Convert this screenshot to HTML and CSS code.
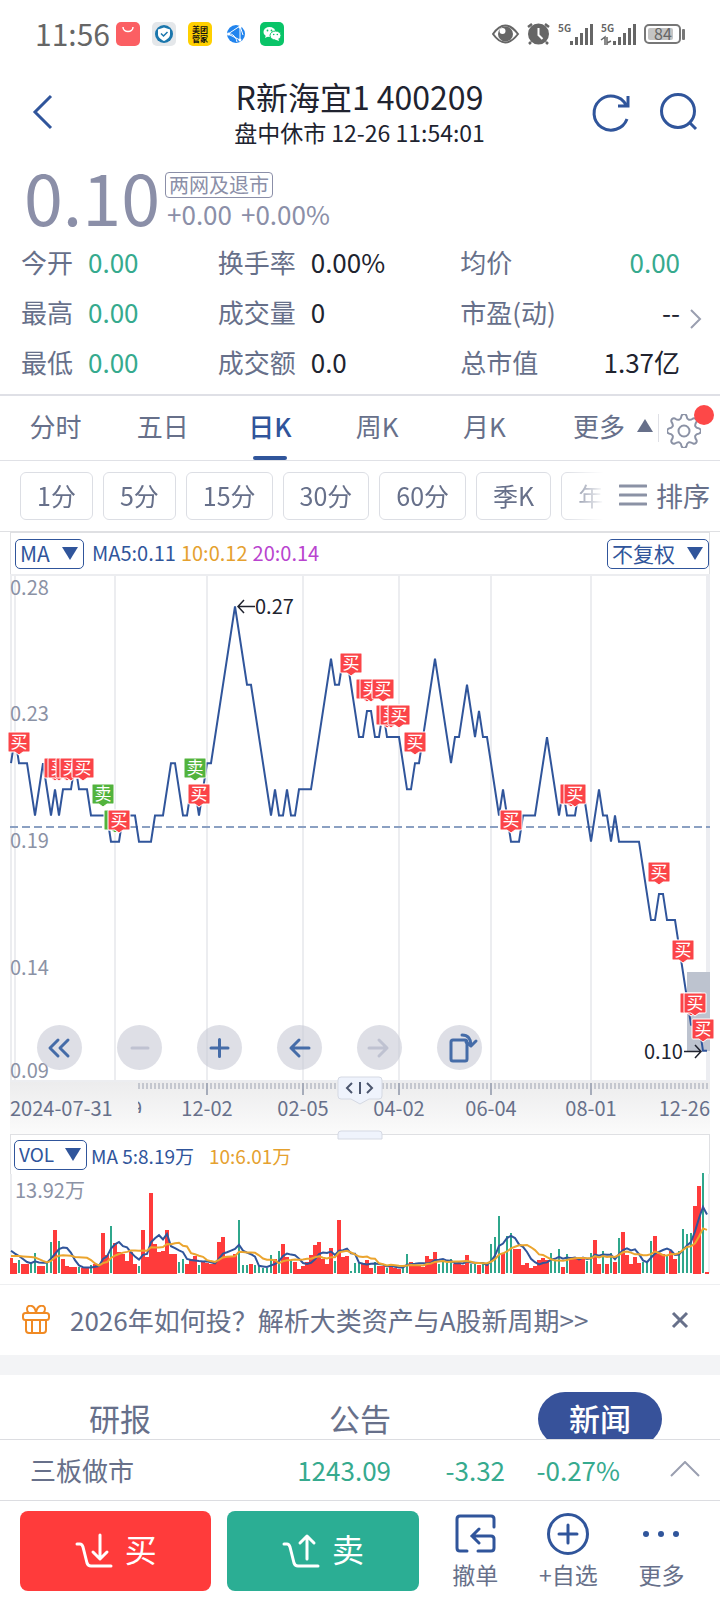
FILE: index.html
```html
<!DOCTYPE html>
<html lang="zh-CN">
<head>
<meta charset="utf-8">
<meta name="viewport" content="width=device-width, initial-scale=1">
<title>R新海宜1 400209</title>
<link rel="stylesheet" href="styles.css">
</head>
<body>
<div class="app">
  <div class="status">
    <span class="clock">11:56</span>
    <svg class="app-icon" viewBox="0 0 24 24"><rect width="24" height="24" rx="5" fill="#fb5f63"/><path d="M7 5c0 6 10 6 10 0" fill="none" stroke="#fff" stroke-width="1.5"/></svg>
    <svg class="app-icon" viewBox="0 0 24 24"><rect width="24" height="24" rx="5" fill="#e4e7ea"/><circle cx="12" cy="12" r="9" fill="#1b77ad"/><path d="M12 5.500l6 2v5c0 3-3 5-6 6.500-3-1.500-6-3.500-6-6.500v-5z" fill="#fff"/><path d="M9 11.500l2.500 2.500 4-4" fill="none" stroke="#1b77ad" stroke-width="1.500"/></svg>
    <span class="app-icon meituan">美团<br>管家</span>
    <svg class="app-icon" viewBox="0 0 24 24"><circle cx="12" cy="12" r="9" fill="#2184ee"/><path d="M4 12l12-8M4 12l12 6M16 4v14M4 12c2-1 8 1 9 8M16 4l3 9" fill="none" stroke="#fff" stroke-width="1"/><circle cx="4.500" cy="12" r="1.500" fill="#fff"/><circle cx="16" cy="5" r="1.500" fill="#fff"/><circle cx="16" cy="18" r="1.500" fill="#fff"/></svg>
    <svg class="app-icon" viewBox="0 0 24 24"><rect width="24" height="24" rx="5" fill="#09c468"/><ellipse cx="9.500" cy="10" rx="6" ry="5" fill="#fff"/><path d="M5 16l1-3 3 1z" fill="#fff"/><ellipse cx="15.500" cy="13.500" rx="5.500" ry="4.500" fill="#fff" stroke="#09c468"/><path d="M19 19l-1-3-3 1.500z" fill="#fff"/><g fill="#09c468"><circle cx="7.500" cy="8.500" r=".9"/><circle cx="11.500" cy="8.500" r=".9"/><circle cx="13.700" cy="12.500" r=".8"/><circle cx="17.300" cy="12.500" r=".8"/></g></svg>
    <svg class="status-right" viewBox="0 0 196 26" role="img" aria-label="5G 84">
      <g fill="#666">
        <path d="M1 13q12-17 25 0q-13 17-25 0z" fill="none" stroke="#666" stroke-width="2"/>
        <circle cx="13.500" cy="13" r="7.500"/><circle cx="10.500" cy="10" r="3" fill="#fff"/>
        <circle cx="46.500" cy="13" r="10.500"/>
        <path d="M36 6l4-3M57 6l-4-3M39 21l-2 2M54 21l2 2" stroke="#666" stroke-width="2.500"/>
        <path d="M46.500 7v7l4 4" fill="none" stroke="#fff" stroke-width="2"/>
        <text x="66" y="11" class="net">5G</text><text x="109" y="11" class="net">5G</text>
        <path d="M78 20h3v4h-3zM83 16h3v8h-3zM88 12h3v12h-3zM93 7h3v17h-3zM98 3h3v21h-3zM121 20h3v4h-3zM126 16h3v8h-3zM131 12h3v12h-3zM136 7h3v17h-3zM141 3h3v21h-3z"/>
        <path d="M109 19l4-3v8M115 16v8M115 22l4-2" fill="none" stroke="#666" stroke-width="1.500"/>
      </g>
      <rect x="153" y="4" width="35" height="18" rx="4" fill="none" stroke="#777" stroke-width="2"/>
      <rect x="156" y="7" width="25" height="12" rx="2" fill="#c4c4c4"/>
      <rect x="190" y="8" width="3" height="11" rx="1" fill="#777"/>
      <text x="171" y="19" text-anchor="middle" class="battery">84</text>
    </svg>
  </div>

  <header class="header">
    <button class="icon-btn back" aria-label="返回"><svg width="20" height="34" viewBox="0 0 20 34"><path d="M18 1L2 17l16 16"/></svg></button>
    <div class="title">
      <h1>R新海宜1 400209</h1>
      <p>盘中休市 12-26 11:54:01</p>
    </div>
    <div class="header-actions">
      <button class="icon-btn" aria-label="刷新"><svg width="38" height="38" viewBox="0 0 38 38"><path d="M35 26A17 17 0 1 1 34 12M36 3v10H26"/></svg></button>
      <button class="icon-btn search" aria-label="搜索"><svg width="38" height="38" viewBox="0 0 38 38"><circle cx="18" cy="18" r="16.500"/><path d="M29 29l7 7"/></svg></button>
    </div>
  </header>

  <main class="content">
    <section class="quote">
      <strong class="price">0.10</strong>
      <div class="quote-side">
        <span class="tag">两网及退市</span>
        <span class="change"><span>+0.00</span><span>+0.00%</span></span>
      </div>
    </section>

    <section class="stats">
      <dl>
        <div><dt>今开</dt><dd class="green">0.00</dd></div>
        <div><dt>最高</dt><dd class="green">0.00</dd></div>
        <div><dt>最低</dt><dd class="green">0.00</dd></div>
      </dl>
      <dl>
        <div><dt>换手率</dt><dd>0.00%</dd></div>
        <div><dt>成交量</dt><dd>0</dd></div>
        <div><dt>成交额</dt><dd>0.0</dd></div>
      </dl>
      <dl class="spread">
        <div><dt>均价</dt><dd class="green">0.00</dd></div>
        <div><dt>市盈(动)</dt><dd>--</dd></div>
        <div><dt>总市值</dt><dd>1.37亿</dd></div>
      </dl>
      <button class="more-stats" aria-label="更多指标"><svg width="12" height="20" viewBox="0 0 12 20"><path d="M1 1l9 9-9 9"/></svg></button>
    </section>

    <nav class="periods">
      <button class="period">分时</button>
      <button class="period">五日</button>
      <button class="period active">日K</button>
      <button class="period">周K</button>
      <button class="period">月K</button>
      <button class="period-more">更多<i class="tri up"></i></button>
      <button class="gear" aria-label="设置"><svg width="34" height="34" viewBox="-17 -17 34 34"><path d="M15.300 -2.400A2.600 2.600 0 0 1 15.300 2.400C11 3 10 5.500 12.500 9.100A2.600 2.600 0 0 1 9.100 12.500C5.500 10 3 11 2.400 15.300A2.600 2.600 0 0 1 -2.400 15.300C-3 11 -5.500 10 -9.100 12.500A2.600 2.600 0 0 1 -12.500 9.100C-10 5.500 -11 3 -15.300 2.400A2.600 2.600 0 0 1 -15.300 -2.400C-11 -3 -10 -5.500 -12.500 -9.100A2.600 2.600 0 0 1 -9.100 -12.500C-5.500 -10 -3 -11 -2.400 -15.300A2.600 2.600 0 0 1 2.400 -15.300C3 -11 5.500 -10 9.100 -12.500A2.600 2.600 0 0 1 12.500 -9.100C10 -5.500 11 -3 15.300 -2.400Z"/><circle r="5.500"/></svg><i class="dot"></i></button>
    </nav>

    <div class="chips">
      <div class="chip-list">
        <button class="chip">1分</button>
        <button class="chip">5分</button>
        <button class="chip">15分</button>
        <button class="chip">30分</button>
        <button class="chip">60分</button>
        <button class="chip">季K</button>
        <button class="chip">年K</button>
      </div>
      <button class="sort"><svg width="28" height="24" viewBox="0 0 28 24"><path d="M1 3h26M1 12h26M1 21h26"/></svg>排序</button>
    </div>

    <section class="chart">
      <div class="chart-head">
        <label class="picker"><select class="wide" aria-label="主图指标"><option>MA</option></select><i class="tri"></i></label>
        <p class="legend"><span class="blue">MA5:0.11</span><span class="gold">10:0.12</span><span class="purple">20:0.14</span></p>
        <label class="picker end"><select class="wide" aria-label="复权"><option>不复权</option></select><i class="tri"></i></label>
      </div>
      <div class="plot">
        <svg id="price" class="svg" viewBox="10 574 700 560">
          <defs>
            <linearGradient id="strip" x2="0" y2="1"><stop stop-color="#ececed"/><stop offset="1" stop-color="#fbfbfb"/></linearGradient>
            <clipPath id="cut"><rect x="138" y="1096" width="8" height="17"/></clipPath>
          </defs>
        </svg>
        <div class="tools">
          <button aria-label="展开"><svg viewBox="0 0 45 45"><path d="M21 15l-8 8 8 8M31 15l-8 8 8 8"/></svg></button>
          <button aria-label="缩小" disabled><svg viewBox="0 0 45 45"><path d="M15 23h16"/></svg></button>
          <button aria-label="放大"><svg viewBox="0 0 45 45"><path d="M14 23h17M22.500 14.500v17"/></svg></button>
          <button aria-label="左移"><svg viewBox="0 0 45 45"><path d="M32 23H14M22 15l-8 8 8 8"/></svg></button>
          <button aria-label="右移" disabled><svg viewBox="0 0 45 45"><path d="M12 23h18M22 15l8 8-8 8"/></svg></button>
          <button aria-label="横屏"><svg viewBox="0 0 45 45"><rect x="14" y="15" width="16" height="21" rx="2"/><path d="M25 10c6 0 9 4 9 10M29 17l5 4 5-5"/></svg></button>
        </div>
      </div>
      <div class="chart-head volume">
        <label class="picker"><select aria-label="副图指标"><option>VOL</option></select><i class="tri"></i></label>
        <p class="legend"><span class="blue">MA 5:8.19万</span><span class="gold second">10:6.01万</span></p>
      </div>
      <svg id="vol" class="svg" viewBox="10 1174 700 102"></svg>
    </section>

    <aside class="banner">
      <svg width="28" height="30" viewBox="0 0 28 30"><rect x="1" y="8" width="26" height="7" rx="2.500"/><path d="M4 15v10q0 3 3 3h14q3 0 3-3V15M10 15v13M18 15v13M14 8c-1-9-9-9-9-4q0 3 2 4M14 8c1-9 9-9 9-4q0 3-2 4"/></svg>
      <a href="#">2026年如何投？解析大类资产与A股新周期&gt;&gt;</a>
      <button aria-label="关闭"><svg width="18" height="18" viewBox="0 0 18 18"><path d="M2 2l14 14M16 2L2 16"/></svg></button>
    </aside>

    <nav class="sections">
      <button>研报</button><button>公告</button><button class="active">新闻</button>
    </nav>
  </main>

  <footer class="footer">
    <div class="index">
      <span class="name">三板做市</span><span>1243.09</span><span>-3.32</span><span>-0.27%</span>
      <button aria-label="展开指数"><svg width="30" height="16" viewBox="0 0 30 16"><path d="M1 15L15 1l14 14"/></svg></button>
    </div>
    <div class="actions">
      <button class="trade buy"><svg width="38" height="36" viewBox="0 0 38 36"><path d="M2 11h3q2 0 3 3l4 16q1 3 4 3h20M25 2v23M18 19l7 7 7-7"/></svg><span>买</span></button>
      <button class="trade sell"><svg width="38" height="36" viewBox="0 0 38 36"><path d="M2 11h3q2 0 3 3l4 16q1 3 4 3h20M25 26V3M18 10l7-7 7 7"/></svg><span>卖</span></button>
      <button class="act"><svg width="42" height="42" viewBox="0 0 42 42"><path d="M40 14V6q0-3-3-3H6Q3 3 3 6v29q0 3 3 3h7M24 38h13q3 0 3-3V26q0-3-3-3H18M25 16l-7 7 7 7"/></svg>撤单</button>
      <button class="act"><svg width="42" height="42" viewBox="0 0 42 42"><circle cx="21" cy="21" r="19.500"/><path d="M12 21h18M21 12v18"/></svg>+自选</button>
      <button class="act"><svg width="42" height="42" viewBox="0 0 42 42"><g fill="#30559b" stroke="none"><circle cx="6" cy="21" r="3"/><circle cx="21" cy="21" r="3"/><circle cx="36" cy="21" r="3"/></g></svg>更多</button>
    </div>
  </footer>
</div>
<script src="chart.js"></script>
</body>
</html>
```

FILE: styles.css
```css
* { box-sizing: border-box; }

body {
  margin: 0;
  background: #fff;
  color: #20232f;
  font-family: "Noto Sans CJK SC", sans-serif;
}

h1, p, dl, dd { margin: 0; }

button, select {
  margin: 0;
  padding: 0;
  border: 0;
  background: none;
  color: inherit;
  font: inherit;
}

svg { flex: none; }

.app {
  display: flex;
  flex-direction: column;
  height: 100vh;
}

.content {
  flex: 1;
  min-height: 0;
  overflow: hidden;
}

/* status bar */
.status {
  display: flex;
  align-items: center;
  gap: 12px;
  height: 68px;
  padding: 0 32px 0 35px;
}

.clock {
  margin-right: -6px;
  padding-bottom: 3px;
  color: #666;
  font-size: 30px;
  line-height: 40px;
}

.app-icon {
  width: 24px;
  height: 24px;
}

.meituan {
  border-radius: 5px;
  background: #ffd000;
  color: #111;
  font-size: 8px;
  font-weight: 700;
  line-height: 9px;
  padding: 3px 4px;
  white-space: nowrap;
}

.status-right {
  width: 196px;
  height: 26px;
  margin-left: auto;
}

.net { font-size: 10px; font-weight: 700; }
.battery { font-size: 16px; fill: #666; }

/* header */
.header {
  display: grid;
  grid-template-columns: 1fr auto 1fr;
  height: 92px;
  padding: 10px 22px 0 33px;
}

.title {
  display: flex;
  flex-direction: column;
  gap: 4px;
  padding-right: 12px;
  text-align: center;
}

.title h1 {
  font-size: 32px;
  font-weight: 400;
  line-height: 36px;
}

.title p {
  font-size: 23px;
  line-height: 28px;
}

.icon-btn { display: flex; }

.icon-btn svg {
  overflow: visible;
  fill: none;
  stroke: #30559b;
  stroke-width: 3;
}

.back { align-self: start; padding-top: 17px; }

.header-actions {
  display: flex;
  justify-content: flex-end;
  align-items: flex-start;
  gap: 30px;
  padding-top: 15px;
}

/* price */
.quote {
  display: flex;
  gap: 5px;
  padding: 2px 22px 7px 24px;
  color: #8b8fa8;
}

.price {
  font-size: 70px;
  font-weight: 400;
  line-height: 68px;
}

.quote-side {
  display: flex;
  flex-direction: column;
  align-items: flex-start;
  gap: 3px;
  padding-top: 10px;
}

.tag {
  padding: 0 3px;
  border: 1px solid #8b8fa8;
  border-radius: 4px;
  font-size: 20px;
  line-height: 24px;
}

.change {
  display: flex;
  gap: 9px;
  padding-left: 2px;
  font-size: 26px;
  line-height: 26px;
}

/* stats */
.stats {
  display: grid;
  grid-template-columns: 197fr 243fr 220fr 20px;
  padding: 0 20px 7px 21px;
  border-bottom: 2px solid #dfe0e6;
  font-size: 26px;
  line-height: 50px;
}

.stats dl > div { display: flex; gap: 15px; }
.stats dt { color: #67708a; }
.stats .spread > div { justify-content: space-between; }
.green { color: #36aa8e; }

.more-stats {
  display: flex;
  align-items: center;
  margin-left: 10px;
  padding-top: 13px;
}

.more-stats svg { fill: none; stroke: #9a9fb0; stroke-width: 2; }

/* periods */
.periods {
  display: flex;
  height: 65px;
  padding-left: 2px;
  border-bottom: 1px solid #e0e1e6;
  color: #67708a;
  font-size: 26px;
}

.period {
  flex: 108;
  position: relative;
  padding-bottom: 6px;
}

.period.active { color: #30559b; font-weight: 500; }

.period.active::after {
  content: "";
  position: absolute;
  left: calc(50% - 17px);
  bottom: 0;
  width: 34px;
  height: 4px;
  border-radius: 2px;
  background: #30559b;
}

.period-more {
  flex: 116;
  display: flex;
  align-items: center;
  justify-content: flex-end;
  gap: 12px;
  padding: 0 5px 6px 0;
}

.gear {
  flex: 0 0 62px;
  position: relative;
  display: flex;
  align-items: center;
  padding: 5px 0 0 9px;
}

.gear::before {
  content: "";
  position: absolute;
  left: 0;
  top: 18px;
  width: 1px;
  height: 28px;
  background: #dfe0e6;
}

.gear svg { fill: none; stroke: #8b92a5; stroke-width: 2; }

.dot {
  position: absolute;
  left: 36px;
  top: 9px;
  width: 20px;
  height: 20px;
  border-radius: 50%;
  background: #fd4848;
}

.tri {
  border: 8px solid transparent;
  border-top: 13px solid #30559b;
  border-bottom: 0;
}

.tri.up {
  border-top: 0;
  border-bottom: 13px solid #67708a;
}

/* chips */
.chips {
  display: flex;
  height: 70px;
  padding: 11px 10px 11px 20px;
  color: #67708a;
  font-size: 25px;
}

.chip-list {
  flex: 1;
  display: flex;
  gap: 10px;
  min-width: 0;
  overflow: hidden;
  -webkit-mask-image: linear-gradient(90deg, #000 calc(100% - 40px), transparent);
  mask-image: linear-gradient(90deg, #000 calc(100% - 40px), transparent);
}

.chip {
  flex: none;
  height: 48px;
  padding: 0 16px 2px;
  border: 1px solid #dcdee4;
  border-radius: 6px;
}

.sort {
  display: flex;
  align-items: center;
  gap: 9px;
  padding: 0 0 2px 15px;
  font-size: 27px;
}

.sort svg { fill: none; stroke: #8b92a5; stroke-width: 3; stroke-linecap: round; }

/* charts */
.chart {
  border-top: 1px solid #dfe0e3;
  padding: 0 10px;
}

.chart-head {
  display: flex;
  align-items: center;
  gap: 8px;
  height: 42px;
  padding-left: 4px;
  border: solid #dfe0e3;
  border-width: 1px 1px 0;
}

.chart-head.volume {
  height: 40px;
  gap: 4px;
  padding-left: 3px;
}

.picker {
  position: relative;
  display: flex;
  align-items: center;
}

.picker select {
  appearance: none;
  height: 30px;
  padding: 0 31px 3px 4px;
  border: 1px solid #30559b;
  border-radius: 5px;
  background: #fff;
  color: #30559b;
  font-size: 19px;
  line-height: 26px;
}

.picker select.wide {
  padding-right: 33px;
  font-size: 21px;
}

.picker .tri {
  position: absolute;
  right: 6px;
  pointer-events: none;
}

.picker.end { margin-left: auto; }

.legend {
  display: flex;
  gap: 5px;
  padding-bottom: 1px;
  font-size: 20px;
  line-height: 30px;
}

.volume .legend {
  padding: 3px 0 0;
  font-size: 19px;
}

.second { margin-left: 10px; }
.blue { color: #30559b; }
.gold { color: #e5a12f; }
.purple { color: #b944cf; }

.plot { position: relative; }

.svg {
  display: block;
  width: 100%;
  font-size: 20px;
  overflow: visible;
}

.axis { fill: #8b92a5; }
.date { fill: #67708a; }
.note { fill: #20232f; }

.mark {
  fill: #fff;
  font-size: 17px;
  text-anchor: middle;
}

.tools {
  position: absolute;
  left: 27px;
  bottom: 64px;
  display: flex;
  gap: 35px;
}

.tools button {
  width: 45px;
  height: 45px;
  border-radius: 50%;
  background: rgba(200, 202, 214, .6);
}

.tools svg {
  display: block;
  fill: none;
  stroke: #456ca8;
  stroke-width: 3;
  stroke-linecap: round;
  stroke-linejoin: round;
}

.tools button:disabled svg { stroke: #bfc2d1; }

/* banner */
.banner {
  display: flex;
  align-items: center;
  height: 71px;
  margin-top: 8px;
  padding: 0 31px 0 22px;
  border-top: 1px solid #eeeff1;
}

.banner svg { fill: none; stroke: #f08a24; stroke-width: 2; }

.banner a {
  flex: 1;
  padding: 0 0 2px 20px;
  color: #67708a;
  font-size: 26px;
  text-decoration: none;
}

.banner button svg { display: block; stroke: #67708a; stroke-width: 3; }

.sections {
  display: grid;
  grid-template-columns: repeat(3, 1fr);
  justify-items: center;
  padding-top: 17px;
  border-top: 20px solid #f3f4f6;
  color: #67708a;
  font-size: 31px;
}

.sections button {
  width: 124px;
  height: 54px;
  padding-bottom: 4px;
  border-radius: 27px;
}

.sections .active {
  background: #37529a;
  color: #fff;
  font-weight: 500;
}

/* footer */
.index {
  display: grid;
  grid-template-columns: 248fr 113fr 114fr 115fr 100fr;
  align-items: center;
  height: 61px;
  padding: 0 0 2px 30px;
  border-top: 1px solid #dcdde1;
  color: #36aa8e;
  font-size: 26px;
  text-align: right;
}

.name { color: #67708a; text-align: left; }
.index svg { display: block; margin-left: auto; margin-right: 20px; fill: none; stroke: #9a9fb0; stroke-width: 2; }

.actions {
  display: flex;
  height: 100px;
  padding: 10px 12px 9px 20px;
  border-top: 1px solid #dcdde1;
}

.trade {
  flex: 191;
  display: flex;
  align-items: center;
  justify-content: center;
  gap: 12px;
  margin-right: 16px;
  border-radius: 8px;
  color: #fff;
  font-size: 32px;
}

.trade span { padding-bottom: 6px; }
.trade svg { fill: none; stroke: #fff; stroke-width: 3; stroke-linecap: round; stroke-linejoin: round; }
.buy { background: #ff3b3b; }
.sell { background: #2bae94; margin-right: 10px; }

.act {
  flex: 93;
  display: flex;
  flex-direction: column;
  align-items: center;
  gap: 5px;
  padding-top: 2px;
  color: #67708a;
  font-size: 23px;
  line-height: 28px;
  white-space: nowrap;
}

.act svg { fill: none; stroke: #30559b; stroke-width: 3; stroke-linecap: round; }
```

FILE: chart.js
```js
const NS = 'http://www.w3.org/2000/svg';
const BLUE = '#30559b';

function add(parent, tag, attrs, text) {
  const el = document.createElementNS(NS, tag);
  for (const key in attrs) el.setAttribute(key, attrs[key]);
  if (text) el.textContent = text;
  parent.appendChild(el);
  return el;
}

const X = i => 11 + 4 * i;

/* ---- price chart ---- */
const price = document.getElementById('price');
const Y = cents => 606.3 + 26.15 * (27 - cents);

add(price, 'path', {
  d: 'M10 575H710M11 575V1081M15 575V1081M115 575V1081M207 575V1081M303 575V1081M399 575V1081M491 575V1081M591 575V1081M10 1081H710',
  stroke: '#ecedf0', 'stroke-width': 2
});
add(price, 'path', { d: 'M708 575V1081', stroke: '#ecedf1', 'stroke-width': 4 });
add(price, 'rect', { x: 687, y: 972, width: 23, height: 79, fill: '#bdc3cf' });
add(price, 'path', { d: 'M10 827H710', stroke: '#8ba0c2', 'stroke-width': 2, 'stroke-dasharray': '8 4' });

[['0.28', 595], ['0.23', 721], ['0.19', 848], ['0.14', 975], ['0.09', 1078]]
  .forEach(([t, y]) => add(price, 'text', { x: 10, y, class: 'axis' }, t));

/* day index and closing price in cents, at each turn of the line */
const closes = [
  0,21, 1,22, 2,21, 4,21, 6,19, 8,21, 10,19, 11,20, 12,19, 13,20, 15,20, 16,21, 17,20, 19,20,
  20,19, 24,19, 25,18, 27,18, 28,19, 31,19, 32,18, 35,18, 36,19, 38,19, 40,21, 41,21, 43,19,
  44,19, 45,20, 46,20, 47,19, 48,20, 49,21, 50,21, 56,27, 59,24, 60,24, 65,19, 66,20, 67,19,
  68,19, 69,20, 70,19, 71,19, 72,20, 75,20, 80,25, 81,24, 82,24, 83,25, 84,25, 87,22, 88,22,
  89,23, 90,23, 91,22, 92,22, 93,23, 94,22, 97,22, 99,20, 100,20, 101,21, 102,21, 106,25,
  110,21, 111,22, 112,22, 114,24, 116,22, 117,23, 118,22, 119,22, 122,19, 123,20, 124,19,
  125,18, 127,18, 128,19, 131,19, 134,22, 137,19, 138,20, 139,19, 141,19, 142,20, 143,20,
  145,18, 147,20, 148,19, 149,19, 150,18, 151,19, 152,18, 157,18, 160,15, 161,15, 162,16,
  163,16, 164,15, 166,15, 170,11, 171,11, 172,11, 173,10, 174,10
];
const line = [];
for (let k = 0; k < closes.length; k += 2) line.push(X(closes[k]) + ',' + Y(closes[k + 1]));
add(price, 'polyline', { points: line.join(' '), fill: 'none', stroke: BLUE, 'stroke-width': 2 });

/* trade markers: side, centre x, top y; "under" ones lie beneath a later marker */
const RED = '#fb4448', GREEN = '#52b33d';
[
  ['under', 55, 758], ['买', 19, 732], ['买', 59, 758], ['under', 67, 758], ['买', 71, 758], ['买', 83, 758],
  ['卖', 103, 784], ['under', 115, 810, GREEN], ['买', 119, 810], ['卖', 195, 758], ['买', 199, 784],
  ['买', 351, 653], ['under', 367, 679], ['买', 371, 679], ['买', 383, 679],
  ['under', 387, 705], ['买', 391, 705], ['买', 399, 705], ['买', 415, 732], ['买', 511, 810],
  ['under', 571, 784], ['买', 575, 784], ['买', 659, 862], ['买', 683, 940],
  ['under', 691, 993], ['买', 695, 993], ['买', 703, 1019]
].forEach(([side, x, y, color]) => {
  add(price, 'path', {
    d: `M${x - 10} ${y}h20q1 0 1 1v18q0 1-1 1h-6l-4 3-4-3h-6q-1 0-1-1v-18q0-1 1-1z`,
    fill: color || (side === '卖' ? GREEN : RED), stroke: '#fff', 'stroke-width': 1
  });
  if (side !== 'under') add(price, 'text', { x, y: y + 16, class: 'mark' }, side);
});

add(price, 'path', {
  d: 'M255 606.500H238M244 600l-6 6.500 6 6.500M684 1051.500H701M695 1045l6 6.500-6 6.500',
  fill: 'none', stroke: '#20232f', 'stroke-width': 1.5
});
add(price, 'text', { x: 255, y: 614, class: 'note' }, '0.27');
add(price, 'text', { x: 644, y: 1059, class: 'note' }, '0.10');

/* date strip with its ruler */
add(price, 'rect', { x: 10, y: 1082, width: 700, height: 52, fill: 'url(#strip)' });
add(price, 'path', { d: 'M138 1086H708', stroke: '#c4c7cf', 'stroke-width': 6, 'stroke-dasharray': '2 2' });
[['12-02', 207], ['02-05', 303], ['04-02', 399], ['06-04', 491], ['08-01', 591]].forEach(([t, x]) => {
  add(price, 'path', { d: `M${x} 1083v12`, stroke: '#a6acba', 'stroke-width': 2 });
  add(price, 'text', { x, y: 1116, class: 'date', 'text-anchor': 'middle' }, t);
});
add(price, 'text', { x: 10, y: 1116, class: 'date' }, '2024-07-31');
add(price, 'text', { x: 131, y: 1116, class: 'date', 'clip-path': 'url(#cut)' }, '9');
add(price, 'text', { x: 710, y: 1116, class: 'date', 'text-anchor': 'end' }, '12-26');
add(price, 'path', {
  d: 'M341 1077h38q3 0 3 3v16q0 3-3 3h-10l-9 5-9-5h-10q-3 0-3-3v-16q0-3 3-3z',
  fill: '#eff3fc', stroke: '#d5d9e3'
});
add(price, 'path', {
  d: 'M352 1083l-5 5 5 5M360 1082v12M367 1083l5 5-5 5',
  fill: 'none', stroke: '#4c566e', 'stroke-width': 2
});
add(price, 'path', { d: 'M338 1139v-5q0-3 3-3h38q3 0 3 3v5z', fill: '#eff3fc', stroke: '#d5d9e3' });

/* ---- volume chart ---- */
const vol = document.getElementById('vol');
add(vol, 'path', { d: 'M11 1174V1273M709 1174V1273', stroke: '#ecedf0', 'stroke-width': 2 });
add(vol, 'text', { x: 15, y: 1198, class: 'axis' }, '13.92万');

/* bar heights; a negative value is a falling day */
const bars = [
  16,11,-13,10,10,-10,-20,8,8,-10,-31,44,-32,15,8,7,7,-6,6,6,-8,10,10,41,19,-47,31,22,20,13,
  22,10,-7,44,17,81,30,22,23,44,20,20,-11,-14,10,15,18,-8,12,11,10,12,32,37,18,18,20,-53,-8,-8,
  10,-8,-7,-5,-5,-18,15,-22,30,17,-13,12,5,8,12,19,29,32,15,10,26,-12,54,17,18,-2,-10,-10,11,14,
  6,-11,8,8,-5,9,6,5,-7,-19,12,8,8,7,18,15,22,-9,-11,-10,-14,10,10,9,19,-9,-9,9,-9,9,
  -29,-36,-57,21,-37,-40,25,25,9,11,6,8,14,16,14,-20,-12,-24,7,-19,17,15,15,16,-12,-20,34,10,-22,10,
  -20,12,-35,42,19,10,17,11,-11,-10,-32,38,20,20,-17,23,15,-22,-44,-39,-40,68,88,-100,2
];
const BASE = 1274;
let up = '', down = '';
bars.forEach((v, i) => {
  const left = Math.max(10, X(i) - 2);
  if (v > 0) up += `M${left} ${BASE}v${-v}H${X(i) + 2}v${v}z`;
  else down += `M${X(i) - 1} ${BASE - 1}v${v}h2v${-v}z`;
});
add(vol, 'path', { d: up, fill: '#ff3b3b' });
add(vol, 'path', { d: down, fill: '#2fa78c' });

const earlier = [13, 13, 13, 13, 13, 25, 25, 25, 25];
const all = earlier.concat(bars.map(Math.abs));
[[5, BLUE], [10, '#eba52f']].forEach(([n, stroke]) => {
  const pts = bars.map((_, i) => {
    const win = all.slice(i + 10 - n, i + 10);
    return X(i) + ',' + (BASE - win.reduce((a, b) => a + b) / n).toFixed(1);
  });
  add(vol, 'polyline', { points: pts.join(' '), fill: 'none', stroke, 'stroke-width': 2 });
});
```
